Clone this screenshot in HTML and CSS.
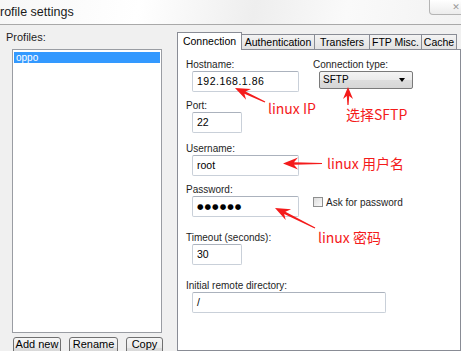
FILE: index.html
```html
<!DOCTYPE html>
<html lang="zh-CN">
<head>
  <meta charset="UTF-8" />
  <title>Profile settings</title>
  <link rel="stylesheet" href="styles.css">
</head>
<body>

<div class="titlebar">
  <span class="title">rofile settings</span>
  <span class="close">&#x2715;</span>
</div>

<div class="dialog">
  <div class="profiles">
    <div class="caption">Profiles:</div>
    <div class="list">
      <div class="item selected">oppo</div>
    </div>
    <div class="buttons">
      <button class="btn add">Add new</button>
      <button class="btn rename">Rename</button>
      <button class="btn copy">Copy</button>
    </div>
  </div>

  <div class="tabs">
    <div class="tabbar">
      <div class="tab active t-conn">Connection</div>
      <div class="tab t-auth">Authentication</div>
      <div class="tab t-xfer">Transfers</div>
      <div class="tab t-ftp">FTP Misc.</div>
      <div class="tab t-cache">Cache</div>
    </div>
    <div class="panel">
      <div class="row">
        <div class="field host">
          <div class="label">Hostname:</div>
          <div class="input wide ip">192.168.1.86</div>
        </div>
        <div class="field">
          <div class="label">Connection type:</div>
          <div class="select">SFTP<span class="caret"></span></div>
        </div>
      </div>

      <div class="field port">
        <div class="label">Port:</div>
        <div class="input short">22</div>
      </div>

      <div class="field user">
        <div class="label">Username:</div>
        <div class="input wide">root</div>
      </div>

      <div class="row pass">
        <div class="field host">
          <div class="label">Password:</div>
          <div class="input wide dots">&#9679;&#9679;&#9679;&#9679;&#9679;&#9679;</div>
        </div>
        <label class="check"><span class="box"></span>Ask for password</label>
      </div>

      <div class="field timeout">
        <div class="label">Timeout (seconds):</div>
        <div class="input short">30</div>
      </div>

      <div class="field remote">
        <div class="label">Initial remote directory:</div>
        <div class="input long">/</div>
      </div>
    </div>
  </div>
</div>

<!-- red notes drawn over the screenshot -->
<svg class="arrows" width="461" height="351" viewBox="0 0 461 351">
  <polygon points="235,88 251.1,88.9 245.5,91.5 265.3,101.5 264.7,102.5 244.4,93.8 246.1,99.8" />
  <polygon points="348,87 353,99 349.2,96 348.6,105 347.4,105 346.8,96 343,99" />
  <polygon points="283,163.5 298,157.5 294,162.2 322,162.9 322,164.1 294,164.8 298,169.5" />
  <polygon points="275,208 291.1,209.3 285.4,211.7 315.3,227.5 314.7,228.5 284.2,214.1 285.7,220.1" />
</svg>
<span class="note n-ip">linux IP</span>
<span class="note n-sftp">选择SFTP</span>
<span class="note n-user">linux 用户名</span>
<span class="note n-pass">linux 密码</span>

</body>
</html>
```

FILE: styles.css
```css
html, body {
  margin: 0;
  padding: 0;
  width: 461px;
  height: 351px;
  overflow: hidden;
}
body {
  position: relative;
  background: #f0f0f0;
  font-family: "Liberation Sans", Arial, sans-serif;
  font-size: 10px;
  color: #000;
}

/* title bar */
.titlebar {
  display: flex;
  align-items: flex-start;
  height: 24px;
  border-bottom: 1px solid #a9a9a9;
  background: linear-gradient(100deg, #f7f7f7 0%, #ffffff 30%, #eeeeee 55%, #fafafa 75%, #f2f2f2 100%);
  overflow: hidden;
}
.title {
  flex: 1;
  font-size: 12.5px;
  line-height: 24px;
  color: #1a1a1a;
}
.close {
  width: 44px;
  height: 14px;
  margin-right: -14px;
  border: 1px solid #b4b4b4;
  border-top: none;
  border-radius: 0 0 0 4px;
  background: linear-gradient(#ffffff, #ececec);
  color: #9a9a9a;
  font-family: "DejaVu Sans", sans-serif;
  font-size: 9px;
  line-height: 14px;
  text-align: center;
  text-indent: 8px;
}

.dialog {
  display: flex;
  height: 326px;
}

/* left column */
.profiles {
  width: 177px;
  flex-shrink: 0;
}
.caption {
  padding: 6px 0 0 6px;
  font-size: 11px;
  line-height: 12px;
  color: #1e1e1e;
}
.list {
  margin: 6px 0 0 12px;
  width: 150px;
  height: 284px;
  box-sizing: border-box;
  border: 1px solid #9a9da3;
  background: #fff;
  padding: 2px 1px;
}
.item {
  height: 11px;
  line-height: 11px;
  padding-left: 2px;
  font-size: 10px;
}
.item.selected {
  background: #3399ff;
  color: #fff;
}
.buttons {
  display: flex;
  gap: 8px;
  margin: 4px 0 0 13px;
}
.btn {
  height: 22px;
  box-sizing: border-box;
  border: 1px solid #707070;
  border-radius: 3px;
  background: linear-gradient(#f6f6f6 0%, #e9e9e9 50%, #dcdcdc 51%, #d2d2d2 100%);
  font-family: "Liberation Sans", Arial, sans-serif;
  font-size: 11px;
  line-height: 13px;
  padding: 0 0 7px;
  color: #000;
}
.add { width: 48px; }
.rename { width: 49px; }
.copy { width: 37px; }

/* tabs */
.tabs {
  flex: 1;
  display: flex;
  flex-direction: column;
}
.tabbar {
  display: flex;
  align-items: flex-end;
  height: 17px;
  margin-top: 7px;
}
.tab {
  box-sizing: border-box;
  height: 15px;
  border: 1px solid #898c95;
  border-bottom: none;
  margin-left: -1px;
  background: linear-gradient(#f3f3f3, #e2e2e2);
  line-height: 14px;
  font-size: 10.5px;
  text-align: center;
  color: #000;
}
.tab.active {
  height: 18px;
  margin-left: 0;
  margin-bottom: -1px;
  background: #fff;
  position: relative;
  z-index: 1;
  line-height: 16px;
}
.t-conn { width: 65px; }
.t-auth { width: 74px; }
.t-xfer { width: 56px; }
.t-ftp { width: 53px; }
.t-cache { width: 36px; }

.panel {
  flex: 1;
  border: 1px solid #898c95;
  background: #fff;
  padding: 9px 0 0 8px;
}

.row {
  display: flex;
}
.field.host {
  width: 127px;
}
.label {
  line-height: 12px;
  color: #1e1e1e;
}
.input {
  box-sizing: border-box;
  height: 21px;
  margin-left: 6px;
  border: 1px solid #c9d0d9;
  border-top-color: #abb2bd;
  border-radius: 2px;
  padding-left: 4px;
  line-height: 19px;
  font-size: 10.5px;
  background: #fff;
}
.wide { width: 107px; }
.short { width: 50px; }
.long { width: 194px; }
.ip { letter-spacing: 0.5px; }
.dots {
  font-family: "DejaVu Sans", sans-serif;
  font-size: 7.5px;
  letter-spacing: 1px;
}

.select {
  position: relative;
  box-sizing: border-box;
  width: 94px;
  height: 18px;
  margin-left: 6px;
  border: 1px solid #7a7a7a;
  border-radius: 2px;
  background: linear-gradient(#f4f4f4 0%, #ebebeb 50%, #dddddd 51%, #d6d6d6 100%);
  padding-left: 3px;
  line-height: 16px;
}
.caret {
  position: absolute;
  right: 7px;
  top: 6px;
  border-left: 3.5px solid transparent;
  border-right: 3.5px solid transparent;
  border-top: 4px solid #000;
}

.port { margin-top: 8px; }
.user { margin-top: 10px; }
.pass { margin-top: 8px; }
.timeout { margin-top: 15px; }
.remote { margin-top: 15px; }

.check {
  display: flex;
  align-items: center;
  gap: 3px;
  margin-top: 12px;
  height: 12px;
  color: #1e1e1e;
}
.box {
  width: 10px;
  height: 10px;
  box-sizing: border-box;
  border: 1px solid #8e8f8f;
  background: linear-gradient(135deg, #dcdcdc, #fbfbfb);
}

/* annotations */
.arrows {
  position: absolute;
  left: 0;
  top: 0;
  fill: #f41b1b;
  pointer-events: none;
}
.note {
  position: absolute;
  font-family: "Noto Sans CJK SC", "Liberation Sans", sans-serif;
  font-size: 14px;
  line-height: 16px;
  color: #f41b1b;
  white-space: nowrap;
}
.n-ip { left: 268px; top: 100px; }
.n-sftp { left: 346px; top: 106px; }
.n-user { left: 327px; top: 155px; }
.n-pass { left: 318px; top: 229px; }
```
